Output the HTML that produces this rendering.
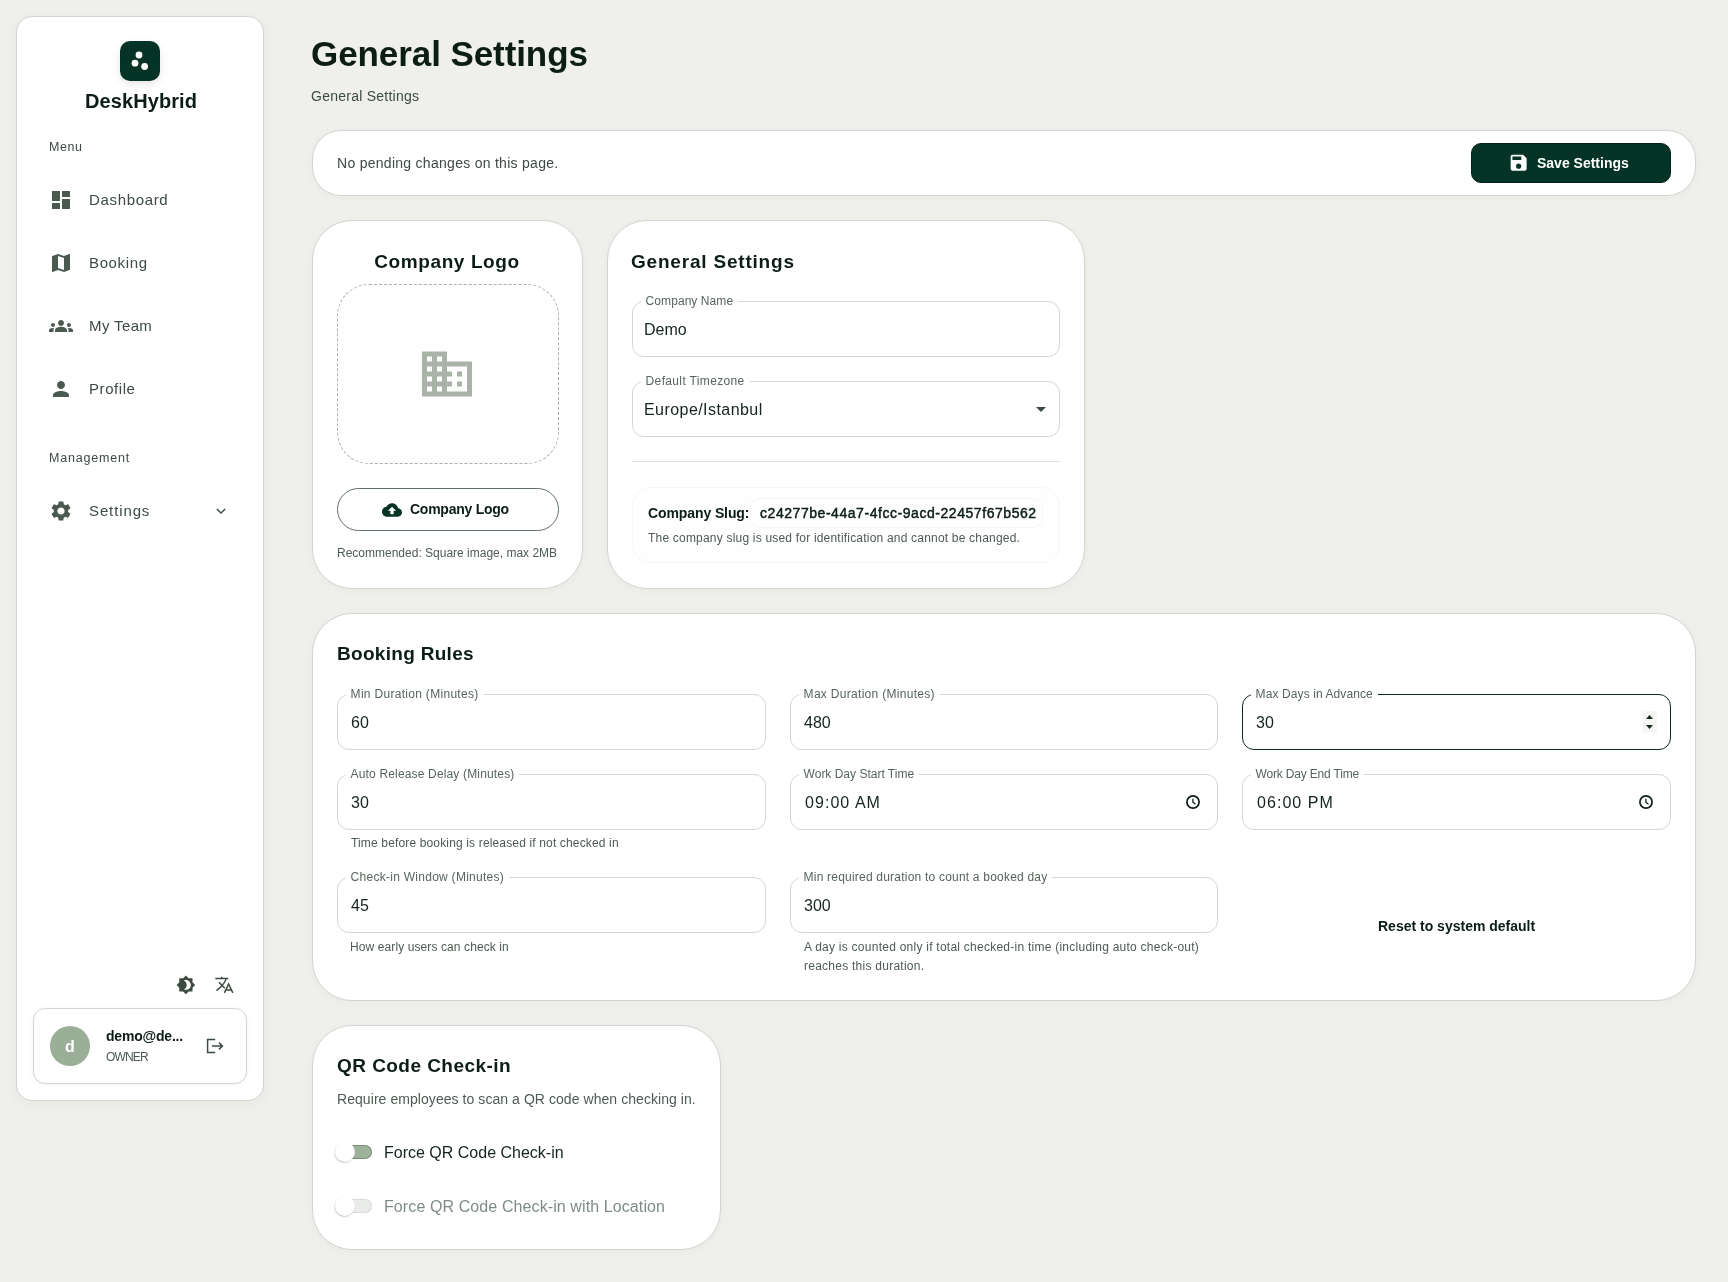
<!DOCTYPE html>
<html><head><meta charset="utf-8"><style>
html,body{margin:0;padding:0;}
body{width:1728px;height:1282px;background:#eff0ec;position:relative;overflow:hidden;font-family:"Liberation Sans", sans-serif;}
.t{position:absolute;white-space:nowrap;line-height:1;will-change:transform;}
</style></head><body>
<div style="position:absolute;left:16px;top:16px;width:248px;height:1085px;box-sizing:border-box;background:#fff;border:1px solid #d1d4d0;border-radius:16px;box-shadow:0 3px 14px rgba(40,50,40,0.045);"></div>
<div style="position:absolute;left:120px;top:41px;width:40px;height:40px;box-sizing:border-box;background:#053325;border-radius:10px;box-shadow:0 3px 8px rgba(0,0,0,0.10);"></div>
<svg style="position:absolute;left:120px;top:41px" width="40" height="40"><circle cx="19" cy="14" r="3.4" fill="#fff"/><circle cx="15" cy="22.2" r="3.4" fill="#fff"/><circle cx="24.6" cy="25.5" r="3.4" fill="#fff"/></svg>
<div class="t" style="top:91.27px;font-size:20px;font-weight:700;color:#0b1d14;letter-spacing:0.1px;left:140.5px;transform:translateX(-50%);">DeskHybrid</div>
<div class="t" style="top:140.92px;font-size:12.5px;font-weight:500;color:#3d4b43;letter-spacing:0.6px;left:49px;">Menu</div>
<svg style="position:absolute;left:49px;top:188px;" width="24" height="24" viewBox="0 0 24 24"><path fill="#4b5a51" d="M3 13h8V3H3v10zm0 8h8v-6H3v6zm10 0h8V11h-8v10zm0-18v6h8V3h-8z"/></svg>
<div class="t" style="top:192.10px;font-size:15px;font-weight:400;color:#3d4b43;letter-spacing:0.66px;left:89px;">Dashboard</div>
<svg style="position:absolute;left:49px;top:251px;" width="24" height="24" viewBox="0 0 24 24"><path fill="#4b5a51" d="m20.5 3-.16.03L15 5.1 9 3 3.36 4.9c-.21.07-.36.25-.36.48V20.5c0 .28.22.5.5.5l.16-.03L9 18.9l6 2.1 5.64-1.9c.21-.07.36-.25.36-.48V3.5c0-.28-.22-.5-.5-.5zM15 19l-6-2.11V5l6 2.11V19z"/></svg>
<div class="t" style="top:255.10px;font-size:15px;font-weight:400;color:#3d4b43;letter-spacing:0.63px;left:89px;">Booking</div>
<svg style="position:absolute;left:49px;top:314px;" width="24" height="24" viewBox="0 0 24 24"><path fill="#4b5a51" d="M12 12.75c1.63 0 3.07.39 4.24.9 1.08.48 1.76 1.56 1.76 2.73V18H6v-1.61c0-1.18.68-2.26 1.76-2.73 1.17-.52 2.61-.91 4.24-.91zM4 13c1.1 0 2-.9 2-2s-.9-2-2-2-2 .9-2 2 .9 2 2 2zm1.13 1.1c-.37-.06-.74-.1-1.13-.1-.99 0-1.93.21-2.78.58C.48 14.9 0 15.62 0 16.43V18h4.5v-1.61c0-.83.23-1.61.63-2.29zM20 13c1.1 0 2-.9 2-2s-.9-2-2-2-2 .9-2 2 .9 2 2 2zm4 3.43c0-.81-.48-1.53-1.22-1.85-.85-.37-1.79-.58-2.78-.58-.39 0-.76.04-1.13.1.4.68.63 1.46.63 2.29V18H24v-1.57zM12 6c1.66 0 3 1.34 3 3s-1.34 3-3 3-3-1.34-3-3 1.34-3 3-3z"/></svg>
<div class="t" style="top:318.10px;font-size:15px;font-weight:400;color:#3d4b43;letter-spacing:0.38px;left:89px;">My Team</div>
<svg style="position:absolute;left:49px;top:377px;" width="24" height="24" viewBox="0 0 24 24"><path fill="#4b5a51" d="M12 12c2.21 0 4-1.79 4-4s-1.79-4-4-4-4 1.79-4 4 1.79 4 4 4zm0 2c-2.67 0-8 1.34-8 4v2h16v-2c0-2.66-5.33-4-8-4z"/></svg>
<div class="t" style="top:380.90px;font-size:15px;font-weight:400;color:#3d4b43;letter-spacing:0.57px;left:89px;">Profile</div>
<div class="t" style="top:451.62px;font-size:12.5px;font-weight:500;color:#3d4b43;letter-spacing:0.82px;left:49px;">Management</div>
<svg style="position:absolute;left:49px;top:499px;" width="24" height="24" viewBox="0 0 24 24"><path fill="#4b5a51" d="M19.14 12.94c.04-.3.06-.61.06-.94 0-.32-.02-.64-.07-.94l2.03-1.58c.18-.14.23-.41.12-.61l-1.92-3.32c-.12-.22-.37-.29-.59-.22l-2.39.96c-.5-.38-1.03-.7-1.62-.94l-.36-2.54c-.04-.24-.24-.41-.48-.41h-3.84c-.24 0-.43.17-.47.41l-.36 2.54c-.59.24-1.13.57-1.62.94l-2.39-.96c-.22-.08-.47 0-.59.22L2.74 8.87c-.12.21-.08.47.12.61l2.03 1.58c-.05.3-.09.63-.09.94s.02.64.07.94l-2.03 1.58c-.18.14-.23.41-.12.61l1.92 3.32c.12.22.37.29.59.22l2.39-.96c.5.38 1.03.7 1.62.94l.36 2.54c.05.24.24.41.48.41h3.84c.24 0 .44-.17.47-.41l.36-2.54c.59-.24 1.13-.56 1.62-.94l2.39.96c.22.08.47 0 .59-.22l1.92-3.32c.12-.22.07-.47-.12-.61l-2.01-1.58zM12 15.6c-1.98 0-3.6-1.62-3.6-3.6s1.62-3.6 3.6-3.6 3.6 1.62 3.6 3.6-1.62 3.6-3.6 3.6z"/></svg>
<div class="t" style="top:503.30px;font-size:15px;font-weight:400;color:#3d4b43;letter-spacing:0.88px;left:89px;">Settings</div>
<svg style="position:absolute;left:211px;top:501px" width="20" height="20" viewBox="0 0 24 24"><path d="M7 9.5l5 5 5-5" fill="none" stroke="#3d4b43" stroke-width="1.7"/></svg>
<svg style="position:absolute;left:175.6px;top:975px;" width="19.8" height="19.8" viewBox="0 0 24 24"><path fill="#3b4b41" d="M20 8.69V4h-4.69L12 .69 8.69 4H4v4.69L.69 12 4 15.31V20h4.69L12 23.31 15.31 20H20v-4.69L23.31 12 20 8.69zM12 18c-.89 0-1.74-.2-2.5-.55C11.56 16.5 13 14.42 13 12s-1.44-4.5-3.5-5.45C10.26 6.2 11.11 6 12 6c3.31 0 6 2.69 6 6s-2.69 6-6 6z"/></svg>
<svg style="position:absolute;left:214px;top:975px" width="20" height="20" viewBox="0 0 20 20" fill="none" stroke="#3b4b41" stroke-width="1.5"><path d="M1.3 3.4H14.2M7.7 1.8V3.4M12.2 3.6C11.4 7.5 8 11 2.6 15.6M5 7.2L10.8 13.2M10.4 17.9L14.6 9.0L18.8 17.9M11.9 15H17.3"/></svg>
<div style="position:absolute;left:33px;top:1008px;width:214px;height:76px;box-sizing:border-box;background:#fff;border:1px solid #d1d4d0;border-radius:12px;box-shadow:0 1px 6px rgba(0,0,0,0.04);"></div>
<div style="position:absolute;left:50px;top:1026px;width:40px;height:40px;box-sizing:border-box;background:#9aae98;border-radius:50%;"></div>
<div class="t" style="top:1039.06px;font-size:16px;font-weight:700;color:#fff;left:70px;transform:translateX(-50%);">d</div>
<div class="t" style="top:1028.85px;font-size:14px;font-weight:700;color:#0b1d14;letter-spacing:-0.2px;left:106.2px;">demo@de...</div>
<div class="t" style="top:1050.64px;font-size:12px;font-weight:400;color:#4b5a51;letter-spacing:-0.85px;left:105.8px;">OWNER</div>
<svg style="position:absolute;left:204px;top:1036px" width="20" height="20" viewBox="0 0 20 20" fill="none" stroke="#3b4b41" stroke-width="1.5"><path d="M11.2 3.4H3.6V16.6H11.2M7.9 10H18.4M15 6.6L18.4 10L15 13.4"/></svg>
<div class="t" style="top:35.97px;font-size:35px;font-weight:700;color:#0b1d14;letter-spacing:-0.08px;left:311px;">General Settings</div>
<div class="t" style="top:89.25px;font-size:14px;font-weight:400;color:#3d4b43;letter-spacing:0.25px;left:311px;">General Settings</div>
<div style="position:absolute;left:312px;top:130px;width:1384px;height:66px;box-sizing:border-box;background:#fff;border:1px solid #d1d4d0;border-radius:29px;box-shadow:0 2px 8px rgba(40,50,40,0.035);"></div>
<div class="t" style="top:156.05px;font-size:14px;font-weight:400;color:#3d4b43;letter-spacing:0.28px;left:337px;">No pending changes on this page.</div>
<div style="position:absolute;left:1471px;top:143px;width:200px;height:40px;box-sizing:border-box;background:#053325;border:1px solid #03231a;border-radius:10px;"></div>
<svg style="position:absolute;left:1508.3px;top:152px;" width="21.3" height="21.3" viewBox="0 0 24 24"><path fill="#fff" d="M17 3H5c-1.11 0-2 .9-2 2v14c0 1.1.89 2 2 2h14c1.1 0 2-.9 2-2V7l-4-4zm-5 16c-1.66 0-3-1.34-3-3s1.34-3 3-3 3 1.34 3 3-1.34 3-3 3zm3-10H5V5h10v4z"/></svg>
<div class="t" style="top:156.15px;font-size:14px;font-weight:700;color:#fff;left:1537px;">Save Settings</div>
<div style="position:absolute;left:312px;top:220px;width:271px;height:369px;box-sizing:border-box;background:#fff;border:1px solid #d1d4d0;border-radius:40px;box-shadow:0 2px 8px rgba(40,50,40,0.035);"></div>
<div class="t" style="top:251.72px;font-size:19px;font-weight:700;color:#0b1d14;letter-spacing:0.6px;left:447px;transform:translateX(-50%);">Company Logo</div>
<div style="position:absolute;left:337px;top:284px;width:222px;height:180px;box-sizing:border-box;background:#fefefe;border:1px dashed #aab2ac;border-radius:32px;"></div>
<svg style="position:absolute;left:417px;top:344px;" width="60" height="60" viewBox="0 0 24 24"><path fill="#a9b3a8" d="M12 7V3H2v18h20V7H12zM6 19H4v-2h2v2zm0-4H4v-2h2v2zm0-4H4V9h2v2zm0-4H4V5h2v2zm4 12H8v-2h2v2zm0-4H8v-2h2v2zm0-4H8V9h2v2zm0-4H8V5h2v2zm10 12h-8v-2h2v-2h-2v-2h2v-2h-2V9h8v10zm-2-8h-2v2h2v-2zm0 4h-2v2h2v-2z"/></svg>
<div style="position:absolute;left:337px;top:488px;width:222px;height:43px;box-sizing:border-box;background:#fff;border:1px solid #5f6f64;border-radius:22px;"></div>
<svg style="position:absolute;left:382px;top:500px;" width="20" height="20" viewBox="0 0 24 24"><path fill="#053325" d="M19.35 10.04C18.67 6.59 15.64 4 12 4 9.11 4 6.6 5.64 5.35 8.04 2.34 8.36 0 10.91 0 14c0 3.31 2.69 6 6 6h13c2.76 0 5-2.24 5-5 0-2.64-2.05-4.78-4.65-4.96zM14 13v4h-4v-4H7l5-5 5 5h-3z"/></svg>
<div class="t" style="top:501.95px;font-size:14px;font-weight:700;color:#0b1d14;letter-spacing:-0.25px;left:409.5px;">Company Logo</div>
<div class="t" style="top:546.64px;font-size:12px;font-weight:400;color:#4d5b52;left:337px;">Recommended: Square image, max 2MB</div>
<div style="position:absolute;left:607px;top:220px;width:478px;height:369px;box-sizing:border-box;background:#fff;border:1px solid #d1d4d0;border-radius:40px;box-shadow:0 2px 8px rgba(40,50,40,0.035);"></div>
<div class="t" style="top:252.32px;font-size:19px;font-weight:700;color:#0b1d14;letter-spacing:0.8px;left:631px;">General Settings</div>
<div style="position:absolute;left:632px;top:301px;width:428px;height:56px;box-sizing:border-box;border:1px solid #d3d7d3;border-radius:12px;background:#fff;"></div>
<div class="t" style="top:295.04px;font-size:12px;font-weight:400;color:#56655b;letter-spacing:0.07px;left:641px;background:#fff;padding:0 5px 0 4.6px;">Company Name</div>
<div class="t" style="top:322.46px;font-size:16px;font-weight:400;color:#14241b;left:644.4px;">Demo</div>
<div style="position:absolute;left:632px;top:381px;width:428px;height:56px;box-sizing:border-box;border:1px solid #d3d7d3;border-radius:12px;background:#fff;"></div>
<div class="t" style="top:375.04px;font-size:12px;font-weight:400;color:#56655b;letter-spacing:0.35px;left:641px;background:#fff;padding:0 5px 0 4.6px;">Default Timezone</div>
<div class="t" style="top:402.46px;font-size:16px;font-weight:400;color:#14241b;letter-spacing:0.44px;left:644.2px;">Europe/Istanbul</div>
<svg style="position:absolute;left:1029px;top:397px" width="24" height="24" viewBox="0 0 24 24"><path d="M7 10l5 5 5-5z" fill="#3d4b43"/></svg>
<div style="position:absolute;left:632px;top:461px;width:428px;height:1px;box-sizing:border-box;background:#dcdfdb;"></div>
<div style="position:absolute;left:632px;top:487px;width:428px;height:76px;box-sizing:border-box;background:#fefefe;border:1px solid #f6f7f5;border-radius:18px;"></div>
<div style="position:absolute;left:750px;top:498px;width:293px;height:30px;box-sizing:border-box;background:#fefefe;border:1px solid #f6f7f5;border-radius:10px;"></div>
<div class="t" style="top:506.25px;font-size:14px;font-weight:700;color:#0b1d14;letter-spacing:-0.1px;left:647.5px;">Company Slug:</div>
<div class="t" style="top:506.25px;font-size:14px;font-weight:400;color:#0b1d14;letter-spacing:0.55px;left:759.5px;-webkit-text-stroke:0.45px #0b1d14;">c24277be-44a7-4fcc-9acd-22457f67b562</div>
<div class="t" style="top:532.24px;font-size:12px;font-weight:400;color:#4d5b52;letter-spacing:0.2px;left:647.5px;">The company slug is used for identification and cannot be changed.</div>
<div style="position:absolute;left:312px;top:613px;width:1384px;height:388px;box-sizing:border-box;background:#fff;border:1px solid #d1d4d0;border-radius:40px;box-shadow:0 2px 8px rgba(40,50,40,0.035);"></div>
<div class="t" style="top:643.92px;font-size:19px;font-weight:700;color:#0b1d14;letter-spacing:0.3px;left:336.5px;">Booking Rules</div>
<div style="position:absolute;left:337px;top:694px;width:429px;height:56px;box-sizing:border-box;border:1px solid #d3d7d3;border-radius:12px;background:#fff;"></div>
<div class="t" style="top:688.04px;font-size:12px;font-weight:400;color:#56655b;letter-spacing:0.3px;left:346px;background:#fff;padding:0 5px 0 4.6px;">Min Duration (Minutes)</div>
<div class="t" style="top:715.46px;font-size:16px;font-weight:400;color:#14241b;left:350.6px;">60</div>
<div style="position:absolute;left:790px;top:694px;width:428px;height:56px;box-sizing:border-box;border:1px solid #d3d7d3;border-radius:12px;background:#fff;"></div>
<div class="t" style="top:688.04px;font-size:12px;font-weight:400;color:#56655b;letter-spacing:0.3px;left:799px;background:#fff;padding:0 5px 0 4.6px;">Max Duration (Minutes)</div>
<div class="t" style="top:715.46px;font-size:16px;font-weight:400;color:#14241b;left:804px;">480</div>
<div style="position:absolute;left:1242px;top:694px;width:429px;height:56px;box-sizing:border-box;border:1px solid #10291f;border-radius:12px;background:#fff;"></div>
<div class="t" style="top:688.04px;font-size:12px;font-weight:400;color:#56655b;letter-spacing:0.1px;left:1251px;background:#fff;padding:0 5px 0 4.6px;">Max Days in Advance</div>
<div class="t" style="top:715.46px;font-size:16px;font-weight:400;color:#14241b;left:1255.6px;">30</div>
<div style="position:absolute;left:337px;top:774px;width:429px;height:56px;box-sizing:border-box;border:1px solid #d3d7d3;border-radius:12px;background:#fff;"></div>
<div class="t" style="top:768.04px;font-size:12px;font-weight:400;color:#56655b;letter-spacing:0.16px;left:346px;background:#fff;padding:0 5px 0 4.6px;">Auto Release Delay (Minutes)</div>
<div class="t" style="top:795.46px;font-size:16px;font-weight:400;color:#14241b;left:350.6px;">30</div>
<div style="position:absolute;left:790px;top:774px;width:428px;height:56px;box-sizing:border-box;border:1px solid #d3d7d3;border-radius:12px;background:#fff;"></div>
<div class="t" style="top:768.04px;font-size:12px;font-weight:400;color:#56655b;left:799px;background:#fff;padding:0 5px 0 4.6px;">Work Day Start Time</div>
<div class="t" style="top:795.46px;font-size:16px;font-weight:400;color:#14241b;letter-spacing:1.05px;left:804.8px;">09:00 AM</div>
<div style="position:absolute;left:1242px;top:774px;width:429px;height:56px;box-sizing:border-box;border:1px solid #d3d7d3;border-radius:12px;background:#fff;"></div>
<div class="t" style="top:768.04px;font-size:12px;font-weight:400;color:#56655b;letter-spacing:-0.18px;left:1251px;background:#fff;padding:0 5px 0 4.6px;">Work Day End Time</div>
<div class="t" style="top:795.46px;font-size:16px;font-weight:400;color:#14241b;letter-spacing:1.05px;left:1256.8px;">06:00 PM</div>
<div style="position:absolute;left:337px;top:877px;width:429px;height:56px;box-sizing:border-box;border:1px solid #d3d7d3;border-radius:12px;background:#fff;"></div>
<div class="t" style="top:871.04px;font-size:12px;font-weight:400;color:#56655b;letter-spacing:0.27px;left:346px;background:#fff;padding:0 5px 0 4.6px;">Check-in Window (Minutes)</div>
<div class="t" style="top:898.46px;font-size:16px;font-weight:400;color:#14241b;left:350.6px;">45</div>
<div style="position:absolute;left:790px;top:877px;width:428px;height:56px;box-sizing:border-box;border:1px solid #d3d7d3;border-radius:12px;background:#fff;"></div>
<div class="t" style="top:871.04px;font-size:12px;font-weight:400;color:#56655b;letter-spacing:0.21px;left:799px;background:#fff;padding:0 5px 0 4.6px;">Min required duration to count a booked day</div>
<div class="t" style="top:898.46px;font-size:16px;font-weight:400;color:#14241b;left:803.6px;">300</div>
<div class="t" style="top:837.04px;font-size:12px;font-weight:400;color:#4d5b52;letter-spacing:0.15px;left:350.5px;">Time before booking is released if not checked in</div>
<div class="t" style="top:940.54px;font-size:12px;font-weight:400;color:#4d5b52;letter-spacing:0.1px;left:350.3px;">How early users can check in</div>
<div class="t" style="top:940.54px;font-size:12px;font-weight:400;color:#4d5b52;letter-spacing:0.25px;left:803.5px;">A day is counted only if total checked-in time (including auto check-out)</div>
<div class="t" style="top:959.64px;font-size:12px;font-weight:400;color:#4d5b52;letter-spacing:0.25px;left:803.5px;">reaches this duration.</div>
<div class="t" style="top:918.95px;font-size:14px;font-weight:700;color:#0b1d14;left:1377.5px;">Reset to system default</div>
<div style="position:absolute;left:1642px;top:711px;width:15px;height:22px;box-sizing:border-box;background:#f6f7f5;"></div>
<svg style="position:absolute;left:1642px;top:711px" width="15" height="22"><path d="M4 8 7.5 4 11 8Z M4 14 11 14 7.5 18Z" fill="#10291f"/></svg>
<svg style="position:absolute;left:1184px;top:793px" width="18" height="18" viewBox="0 0 18 18" fill="none" stroke="#0b1d14" stroke-width="1.7"><circle cx="9" cy="9" r="6.1"/><path d="M8.9 5.8V9.2L11.5 11.2" stroke-width="1.3"/></svg>
<svg style="position:absolute;left:1637px;top:793px" width="18" height="18" viewBox="0 0 18 18" fill="none" stroke="#0b1d14" stroke-width="1.7"><circle cx="9" cy="9" r="6.1"/><path d="M8.9 5.8V9.2L11.5 11.2" stroke-width="1.3"/></svg>
<div style="position:absolute;left:312px;top:1025px;width:409px;height:225px;box-sizing:border-box;background:#fff;border:1px solid #d1d4d0;border-radius:40px;box-shadow:0 2px 8px rgba(40,50,40,0.035);"></div>
<div class="t" style="top:1056.32px;font-size:19px;font-weight:700;color:#0b1d14;letter-spacing:0.45px;left:337px;">QR Code Check-in</div>
<div class="t" style="top:1092.05px;font-size:14px;font-weight:400;color:#4d5b52;letter-spacing:0.06px;left:337px;">Require employees to scan a QR code when checking in.</div>
<div style="position:absolute;left:338px;top:1145.2px;width:34px;height:14px;box-sizing:border-box;background:#9db29a;border-radius:7px;box-shadow:inset 0 0 0 1px rgba(60,80,60,0.35);"></div>
<div style="position:absolute;left:335px;top:1142.2px;width:20px;height:20px;box-sizing:border-box;background:#fff;border-radius:50%;box-shadow:-0.5px 1px 1.5px rgba(40,60,40,0.28);"></div>
<div class="t" style="top:1144.66px;font-size:16px;font-weight:400;color:#14241b;left:384px;">Force QR Code Check-in</div>
<div style="position:absolute;left:338px;top:1199.2px;width:34px;height:14px;box-sizing:border-box;background:#e9ece8;border-radius:7px;box-shadow:inset 0 0 0 1px rgba(60,80,60,0.1);"></div>
<div style="position:absolute;left:335px;top:1196.2px;width:20px;height:20px;box-sizing:border-box;background:#fff;border-radius:50%;box-shadow:-0.5px 1px 1.5px rgba(40,60,40,0.28);"></div>
<div class="t" style="top:1198.66px;font-size:16px;font-weight:400;color:#7f8c84;letter-spacing:0.1px;left:383.7px;">Force QR Code Check-in with Location</div>
</body></html>
